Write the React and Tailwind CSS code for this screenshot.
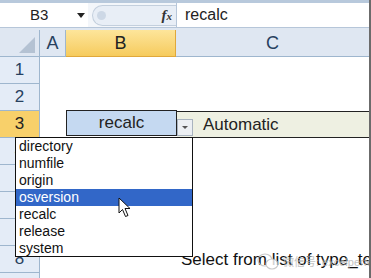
import React from 'react';

const items = ['directory', 'numfile', 'origin', 'osversion', 'recalc', 'release', 'system'];

// one spreadsheet row: header + cells
const Row = ({ n, active, children }) => (
  <div className="flex h-[27px]">
    <div
      className={`w-[40px] shrink-0 flex items-center justify-center text-[17px] border-b border-r border-[#9eb6ce] ${
        active ? 'bg-[#f8d06a] text-[#222]' : 'bg-[#e4ecf7] text-[#27415f]'
      }`}
    >
      {n}
    </div>
    <div className="flex-1 flex relative">{children}</div>
  </div>
);

export default function App() {
  return (
    <div
      className="relative w-[371px] h-[278px] overflow-hidden bg-white border-r-2 border-[#6b6b6b]"
      style={{ fontFamily: '"Liberation Sans", Arial, sans-serif' }}
    >
      {/* top strip */}
      <div className="h-[3px] bg-[#b8c9dc]" />

      {/* formula bar */}
      <div className="flex h-[25px] bg-white border-b border-[#b6c6d9]">
        <div className="w-[88px] flex items-center relative">
          <span className="ml-[30px] text-[15px] text-[#222]">B3</span>
          <span className="absolute left-[77px] top-[10px] w-0 h-0 border-l-[4px] border-r-[4px] border-t-[5px] border-l-transparent border-r-transparent border-t-[#222]" />
        </div>
        <div className="w-[88px] flex items-center bg-[#f3f6fa]">
          <div className="ml-[4px] h-[21px] flex-1 flex items-center rounded-l-full border-l border-y border-[#c3cfdd] bg-[#e8eef6]">
            <span className="ml-[4px] w-[9px] h-[9px] rounded-full bg-[#cdd8e6]" />
            <span
              className="ml-auto mr-[4px] text-[15px] italic font-bold text-[#333]"
              style={{ fontFamily: '"Liberation Serif", serif' }}
            >
              f<span className="text-[11px]">x</span>
            </span>
          </div>
        </div>
        <div className="flex-1 flex items-center border-l border-[#b6c6d9] pl-[8px] text-[16px] text-[#222]">
          recalc
        </div>
      </div>
      <div className="h-[2px] bg-[#dfe7f1]" />

      {/* column headers */}
      <div className="flex h-[27px] text-[18px]">
        <div className="w-[40px] relative bg-[#dfe7f2] border-r border-b border-[#9eb6ce]">
          <span
            className="absolute right-[4px] bottom-[3px] w-0 h-0"
            style={{ borderBottom: '16px solid #b4c2d3', borderLeft: '16px solid transparent' }}
          />
        </div>
        <div className="w-[26px] flex items-center justify-center bg-[#dfe7f2] border-r border-b border-[#9eb6ce] text-[#27415f]">A</div>
        <div className="w-[110px] flex items-center justify-center bg-gradient-to-b from-[#fde59a] to-[#f6cb5c] border-r border-b border-[#e0a83b] text-[#222]">B</div>
        <div className="flex-1 flex items-center justify-center bg-[#dfe7f2] border-b border-[#9eb6ce] text-[#27415f]">C</div>
      </div>

      <Row n="1" />
      <Row n="2" />
      <Row n="3" active>
        <div className="w-[26px]" />
        <div className="w-[111px] h-[26px] flex items-center justify-center bg-[#c5d9f1] border border-[#222] text-[17px] text-[#222] -mt-[1px]">
          recalc
        </div>
        <div className="flex-1 flex items-center bg-[#eef0e2] border-t border-b border-[#222] text-[17px] text-[#222]">
          <span className="w-[16px] h-[17px] mt-[6px] flex items-center justify-center bg-[#eceff3] border border-[#a9b3bf]">
            <span className="w-0 h-0 border-l-[3px] border-r-[3px] border-t-[3px] border-l-transparent border-r-transparent border-t-[#555]" />
          </span>
          <span className="ml-[10px]">Automatic</span>
        </div>
      </Row>
      <Row n="4" />
      <Row n="5" />
      <Row n="6" />
      <Row n="7" />
      <Row n="8">
        <span className="ml-[141px] mt-[1px] text-[17px] text-[#111] whitespace-nowrap">Select from list of type_text</span>
      </Row>
      <Row n="9" />

      {/* watermark */}
      <div className="absolute left-[257px] top-[253px] flex items-center gap-[4px] text-[#b5b5b5] opacity-80">
        <svg width="22" height="18" viewBox="0 0 22 18" fill="none" stroke="#bdbdbd" strokeWidth="1.2">
          <ellipse cx="8" cy="7" rx="7" ry="6" />
          <ellipse cx="15" cy="11" rx="6" ry="5" fill="white" />
        </svg>
        <span className="text-[11px] whitespace-nowrap" style={{ fontFamily: '"Liberation Sans", "Noto Sans CJK SC", sans-serif' }}>
          微信号: excelperfect
        </span>
      </div>

      {/* validation dropdown list */}
      <div className="absolute left-[15px] top-[137px] w-[178px] h-[120px] bg-white border border-[#111] text-[14px] text-[#111]">
        {items.map((it) => (
          <div
            key={it}
            className={`h-[17px] leading-[17px] pl-[3px] ${it === 'osversion' ? 'bg-[#3267c8] text-white' : ''}`}
          >
            {it}
          </div>
        ))}
      </div>

      {/* mouse pointer */}
      <svg className="absolute left-[118px] top-[197px]" width="14" height="21" viewBox="0 0 14 21">
        <path d="M1 1 L1 16 L4.5 12.5 L7.5 19.5 L10 18.5 L7 11.5 L12 11.5 Z" fill="white" stroke="#111" strokeWidth="1" strokeLinejoin="round" />
      </svg>
    </div>
  );
}
